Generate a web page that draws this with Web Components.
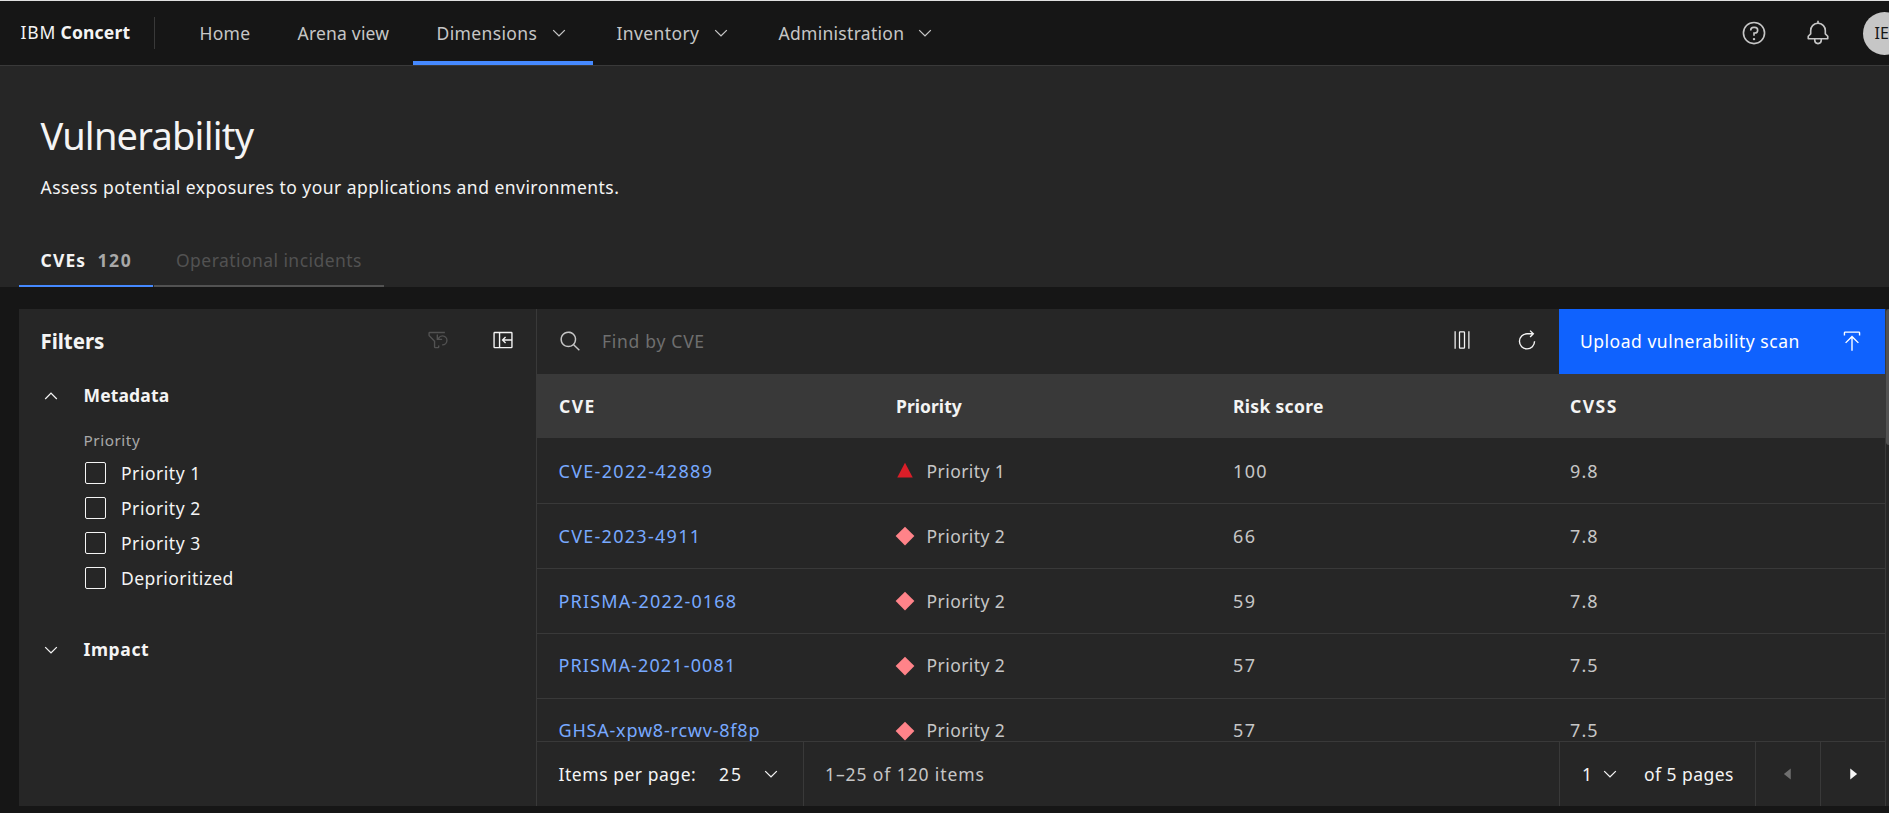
<!DOCTYPE html>
<html lang="en"><head><meta charset="utf-8"><title>Concert</title>
<style>html,body{margin:0;height:100%;overflow:hidden;background:#161616}</style></head>
<body><vuln-app></vuln-app>
<script>
const ICONS={
 down:'<path d="M16 22L6 12l1.4-1.4L16 19.2l8.600-8.600L26 12z"/>',
 up:'<path d="M16 10l10 10-1.400 1.400L16 12.800l-8.600 8.600L6 20z"/>',
 help:'<path d="M16 2a14 14 0 1014 14A14 14 0 0016 2zm0 26a12 12 0 1112-12 12 12 0 01-12 12z"/><circle cx="16" cy="23.500" r="1.500"/><path d="M17 8h-1.500A4.490 4.490 0 0011 12.500v.5h2v-.5a2.500 2.500 0 012.500-2.500H17a2.500 2.500 0 010 5h-2v4.500h2V17a4.500 4.500 0 000-9z"/>',
 bell:'<path d="M28.707 19.293L26 16.586V13a10.014 10.014 0 00-9-9.950V1h-2v2.050A10.014 10.014 0 006 13v3.586l-2.707 2.707A1 1 0 003 20v3a1 1 0 001 1h7v1a5 5 0 0010 0v-1h7a1 1 0 001-1v-3a1 1 0 00-.293-.707zM19 25a3 3 0 01-6 0v-1h6zm8-3H5v-1.586l2.707-2.707A1 1 0 008 17v-4a8 8 0 0116 0v4a1 1 0 00.293.707L27 20.414z"/>',
 search:'<path d="M29 27.586l-7.552-7.552a11.018 11.018 0 10-1.414 1.414L27.586 29zM4 13a9 9 0 119 9 9.010 9.010 0 01-9-9z"/>',
 reset:'<path d="M22.500 9a7.452 7.452 0 00-6.500 3.792V8h-2v8h8v-2h-4.383a5.494 5.494 0 114.883 8H22v2h.5a7.500 7.500 0 000-15z"/><path d="M26 6H4v3.171l7.414 7.414.586.586V26h4v-2h2v2a2 2 0 01-2 2h-4a2 2 0 01-2-2v-8L2.586 10.586A2 2 0 012 9.171V6a2 2 0 012-2h22z"/>',
 panel:'<path d="M28 4H4a2 2 0 00-2 2v20a2 2 0 002 2h24a2 2 0 002-2V6a2 2 0 00-2-2zM4 6h6v20H4zm24 9H17.830l2.580-2.590L19 11l-5 5 5 5 1.410-1.410L17.830 17H28v9H12V6h16z"/>',
 columns:'<path d="M4 2h2v28H4zM26 2h2v28h-2zM19 2h-6a2 2 0 00-2 2v24a2 2 0 002 2h6a2 2 0 002-2V4a2 2 0 00-2-2zm0 26h-6V4h6z"/>',
 renew:'<path d="M27 16.500A11 11 0 1 1 16 5.500H25M20.500 .9L25.200 5.500 20.500 10.100" fill="none" stroke="currentColor" stroke-width="2"/>',
 upload:'<path d="M6 18l1.410 1.410L15 11.830V30h2V11.830l7.590 7.580L26 18 16 8zM6 8V4h20v4h2V4a2 2 0 00-2-2H6a2 2 0 00-2 2v4z"/>',
 left:'<path d="M20 24L10 16 20 8z"/>', right:'<path d="M12 8l10 8-10 8z"/>',
 tri:'<path d="M16 1.500L31.500 31H.5z"/>',
 diamond:'<path d="M16 1L31 16 16 31 1 16z"/>'
};
const make=(name,html,after)=>customElements.define(name,class extends HTMLElement{
 connectedCallback(){ if(this.shadowRoot)return; this.attachShadow({mode:'open'}).innerHTML=typeof html==='function'?html(this):html; if(after)after(this); }
});

/* One-line label, tracked so that it fills the width given in "w". */
make('ui-text','<style>:host{display:block;white-space:nowrap;flex:none}span{display:inline-block}</style><span><slot></slot></span>',el=>{
 const w=+el.getAttribute('w'); el.style.width=w+'px';
 const s=el.shadowRoot.querySelector('span'), n=el.textContent.length, nat=s.getBoundingClientRect().width;
 if(nat) s.style.letterSpacing=((w+.8-nat)/n).toFixed(3)+'px';
});
make('ui-icon',el=>`<style>:host{display:block;flex:none;width:${el.getAttribute('size')||18}px;height:${el.getAttribute('size')||18}px}svg{display:block;width:100%;height:100%;fill:currentColor;overflow:visible}</style><svg viewBox="0 0 32 32">${ICONS[el.getAttribute('name')]}</svg>`);

make('nav-item',el=>`<style>:host{display:flex;height:64px;align-items:center;box-sizing:border-box;padding:0 24px;gap:12px;color:#c6c6c6}
:host([active]){box-shadow:inset 0 -4px #4589ff}ui-text{padding-bottom:1px}</style>
<ui-text w="${el.getAttribute('w')}">${el.getAttribute('label')}</ui-text>${el.hasAttribute('menu')?'<ui-icon name="down" size="20"></ui-icon>':''}`);

make('app-header',`<style>:host{display:flex;height:66px;box-sizing:border-box;border-top:1px solid #e0e0e0;border-bottom:1px solid #393939;background:#161616;align-items:center;overflow:hidden}
.brand{display:flex;gap:5px;padding-left:20.500px;margin-top:-3px;color:#f4f4f4}b{font-weight:700}
.rule{width:1px;height:32px;background:#393939;margin-left:24px;margin-right:21px}
nav{display:flex;flex:1}.tools{display:flex;align-items:center;color:#c6c6c6;width:148px;flex:none}
.av{width:43px;height:43px;border-radius:50%;background:#c6c6c6;color:#161616;font-size:16px;line-height:43px;margin-left:32px;flex:none;box-sizing:border-box;padding-left:11.500px}</style>
<div class="brand"><ui-text w="35">IBM</ui-text><b><ui-text w="69">Concert</ui-text></b></div><div class="rule"></div>
<nav><nav-item label="Home" w="50"></nav-item><nav-item label="Arena view" w="91"></nav-item>
<nav-item active menu label="Dimensions" w="100"></nav-item><nav-item menu label="Inventory" w="82"></nav-item><nav-item menu label="Administration" w="125" style="gap:11px"></nav-item></nav>
<div class="tools"><ui-icon name="help" size="26"></ui-icon><ui-icon name="bell" size="26" style="margin-left:38px"></ui-icon><div class="av">IE</div></div>`);

make('page-title',`<style>:host{display:block;height:221px;background:#262626;color:#f4f4f4;box-sizing:border-box;padding:44px 0 0 19px}
.t{font-size:38px;font-weight:400;line-height:50px;padding:0 0 0 21.500px}.d{line-height:24px;padding:15px 0 0 21.500px}
.tabs{display:flex;gap:1px;margin-top:41px}.tab{height:47px;box-sizing:border-box;border-bottom:2px solid #525252;display:flex;gap:12px;line-height:41px;padding:0 22px;color:#525252;width:230px}
.tab.on{border-color:#4589ff;color:#f4f4f4;font-weight:700;width:134px;padding-left:21.500px}.n{color:#a8a8a8}</style>
<div class="t"><ui-text w="212">Vulnerability</ui-text></div><div class="d"><ui-text w="578">Assess potential exposures to your applications and environments.</ui-text></div>
<div class="tabs"><div class="tab on"><ui-text w="45">CVEs</ui-text><ui-text class="n" w="34">120</ui-text></div><div class="tab"><ui-text w="185">Operational incidents</ui-text></div></div>`);

make('check-row',el=>`<style>:host{display:flex;height:35px;align-items:center;gap:15px;padding-left:85px;color:#f4f4f4}i{width:21px;height:22px;box-sizing:border-box;border:1px solid #f4f4f4;border-radius:2px}</style><i></i><ui-text w="${el.getAttribute('w')}">${el.getAttribute('label')}</ui-text>`);
make('filter-panel',`<style>:host{display:block;width:517px;flex:none;background:#262626;color:#f4f4f4;border-right:1px solid #393939;box-sizing:content-box}
.h{display:flex;height:65px;align-items:center;padding-left:21.500px;font-size:20.500px;font-weight:700}.h ui-text{margin-bottom:2px}.h ui-icon{margin-bottom:3px}.off{color:#525252;margin-left:323.500px}
.s{display:flex;align-items:center;height:42px;padding-left:22px;gap:22.500px;font-weight:700}
.l{font-size:15.300px;line-height:24px;color:#a8a8a8;padding-left:64.500px;margin-top:12px}
.c{margin-left:-19px;padding-top:3px}</style>
<div class="h"><ui-text w="63">Filters</ui-text><ui-icon class="off" name="reset" size="22"></ui-icon><ui-icon name="panel" size="22" style="margin-left:43px"></ui-icon></div>
<div class="s"><ui-icon name="up" size="20" style="margin-top:2px"></ui-icon><ui-text w="85">Metadata</ui-text></div>
<div class="l"><ui-text w="56">Priority</ui-text></div>
<div class="c"><check-row label="Priority 1" w="79"></check-row><check-row label="Priority 2" w="79"></check-row><check-row label="Priority 3" w="79"></check-row><check-row label="Deprioritized" w="112"></check-row></div>
<div class="s" style="margin-top:33px"><ui-icon name="down" size="20" style="margin-top:2px"></ui-icon><ui-text w="65">Impact</ui-text></div>`);

make('table-toolbar',`<style>:host{display:flex;height:65px;align-items:center;color:#c6c6c6}ui-text{margin-bottom:2px}
.q{color:#6f6f6f;margin-left:20.500px;flex:1}.b{display:flex;align-items:center;height:65px;width:326px;box-sizing:border-box;padding-left:21px;background:#0f62fe;color:#fff;gap:42px}.w{color:#f4f4f4}</style>
<ui-icon name="search" size="23" style="margin:0 0 1px 21.500px"></ui-icon><div class="q"><ui-text w="102">Find by CVE</ui-text></div>
<ui-icon class="w" name="columns" size="20" style="margin:0 44.500px 3px 0"></ui-icon><ui-icon class="w" name="renew" size="22" style="margin:0 21px 1px 0"></ui-icon>
<div class="b"><ui-text w="219">Upload vulnerability scan</ui-text><ui-icon name="upload" size="22" style="margin-bottom:1px"></ui-icon></div>`);

make('cve-row',el=>{const g=k=>el.getAttribute(k),p=g('p');return `<style>:host{display:grid;grid-template-columns:337px 337px 337px 1fr;height:65px;box-sizing:border-box;border-bottom:1px solid #393939;align-items:center;padding-left:22px;color:#c6c6c6}
:host([high]) ui-text{margin-top:-2px}.id,.n{font-size:18px}.id{color:#78a9ff;margin-left:-.5px}.p{display:flex;align-items:center;gap:10.500px}.p ui-icon{color:${p==='1'?'#da1e28':'#ff8389'}}</style>
<ui-text class="id" w="${g('w')}">${g('cve')}</ui-text><div class="p"><ui-icon name="${p==='1'?'tri':'diamond'}" size="${p==='1'?16:20}" style="${p==='1'?'margin:0 3px 2px 1px':'margin:0 1px 0 -1px'}"></ui-icon><ui-text w="78">Priority ${p}</ui-text></div>
<ui-text class="n" w="${g('risk').length*11.400}">${g('risk')}</ui-text><ui-text class="n" w="28">${g('cvss')}</ui-text>`});

make('cve-table',`<style>:host{display:block;height:367px;overflow:hidden}
.h{display:grid;grid-template-columns:337px 337px 337px 1fr;height:64px;align-items:center;background:#393939;color:#f4f4f4;font-weight:700;padding-left:22px}.r{margin-top:1px}</style>
<div class="h"><ui-text w="36">CVE</ui-text><ui-text w="65">Priority</ui-text><ui-text w="90">Risk score</ui-text><ui-text w="47">CVSS</ui-text></div><div class="r">
<cve-row cve="CVE-2022-42889" w="154" p="1" risk="100" cvss="9.8"></cve-row><cve-row cve="CVE-2023-4911" w="142" p="2" risk="66" cvss="7.8"></cve-row>
<cve-row cve="PRISMA-2022-0168" w="178" p="2" risk="59" cvss="7.8"></cve-row><cve-row high cve="PRISMA-2021-0081" w="177" p="2" risk="57" cvss="7.5"></cve-row>
<cve-row high cve="GHSA-xpw8-rcwv-8f8p" w="201" p="2" risk="57" cvss="7.5"></cve-row></div>`);

make('table-pager',`<style>:host{display:flex;height:65px;box-sizing:border-box;border-top:1px solid #393939;color:#f4f4f4}
div{display:flex;align-items:center;box-sizing:border-box;padding-left:22px;border-right:1px solid #393939}.c{color:#c6c6c6}.a{width:65px;padding-left:21px}</style>
<div style="width:267px;padding-left:21.500px"><ui-text w="137">Items per page:</ui-text><ui-text w="23" style="margin-left:23.500px">25</ui-text><ui-icon name="down" size="20" style="margin-left:19px"></ui-icon></div>
<div class="c" style="flex:1;padding-left:21px"><ui-text w="159">1–25 of 120 items</ui-text></div>
<div style="width:196px"><ui-text w="10">1</ui-text><ui-icon name="down" size="20" style="margin-left:8px"></ui-icon><ui-text w="89" style="margin-left:24px">of 5 pages</ui-text></div>
<div class="a" style="color:#6f6f6f"><ui-icon name="left" size="22"></ui-icon></div><div class="a" style="border:0;width:64px"><ui-icon name="right" size="22"></ui-icon></div>`);

make('vuln-app',`<style>:host{display:block;height:813px;background:#161616;font:17.500px/24px "Noto Sans","Open Sans",sans-serif}
main{display:flex;margin:22px 0 0 19px;height:497px}.g{width:1348px;flex:none;background:#262626;border-right:1px solid #393939}
.sb{flex:1;background:#262626}.sb i{display:block;height:136px;background:#525252;border-radius:4px 0 0 4px}</style>
<app-header></app-header><page-title></page-title><main><filter-panel></filter-panel><div class="g"><table-toolbar></table-toolbar><cve-table></cve-table><table-pager></table-pager></div><div class="sb"><i></i></div></main>`);
</script></body></html>
